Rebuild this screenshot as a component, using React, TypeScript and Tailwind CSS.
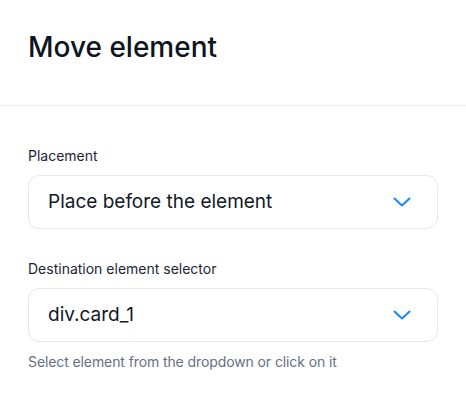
function Chevron() {
    return (
        <svg width="18" height="10" viewBox="0 0 18 10" fill="none" className="shrink-0">
            <path d="M1.5 1.5 L9 8.5 L16.5 1.5" stroke="#1a87ff" strokeWidth="2" strokeLinecap="round" strokeLinejoin="round" />
        </svg>
    )
}

function SelectField({ label, value, hint }: { label: string; value: string; hint?: string }) {
    return (
        <div className="flex flex-col">
            <label className="text-[14px] leading-5 text-[#1e2534] mb-[9px]">{label}</label>
            <button
                type="button"
                className="h-[54px] w-full flex items-center justify-between pl-[19px] pr-[26px] rounded-[11px] border border-[#e6e8ec] bg-white text-left"
            >
                <span className="text-[19px] leading-7 text-[#121826]">{value}</span>
                <Chevron />
            </button>
            {hint && <p className="mt-[10px] text-[14px] leading-5 tracking-[-0.1px] text-[#667085]">{hint}</p>}
        </div>
    )
}

export default function App() {
    return (
        <div className="w-[466px] h-[404px] bg-white font-['Inter',sans-serif]">
            <div className="px-7 pt-[29px] pb-10 border-b border-[#ececec]">
                <h1 className="text-[28px] leading-9 font-medium text-[#0d1424]">Move element</h1>
            </div>

            <div className="px-7 pt-10 flex flex-col gap-[30px]">
                <SelectField label="Placement" value="Place before the element" />
                <SelectField
                    label="Destination element selector"
                    value="div.card_1"
                    hint="Select element from the dropdown or click on it"
                />
            </div>
        </div>
    )
}
